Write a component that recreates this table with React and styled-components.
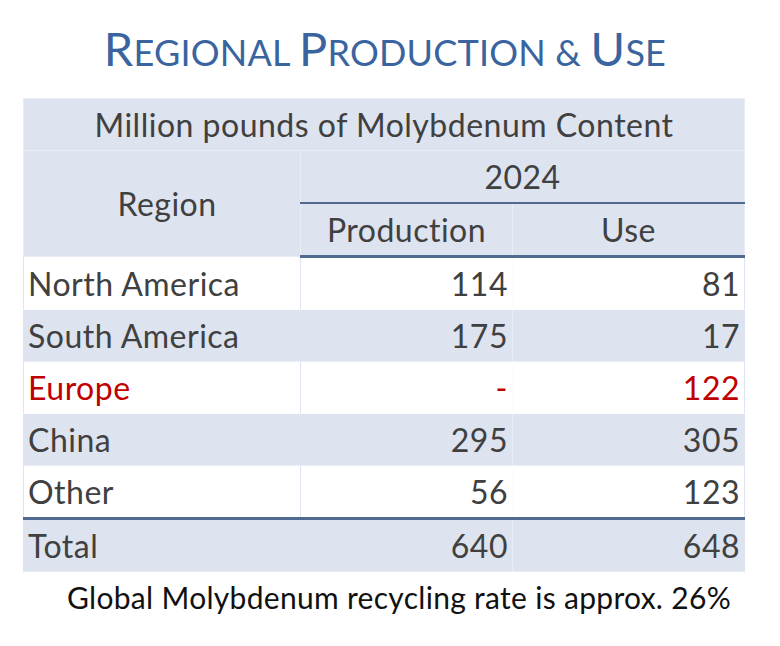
import styled, { createGlobalStyle } from "styled-components";

const rows = [
  { region: "North America", production: "114", use: "81" },
  { region: "South America", production: "175", use: "17" },
  { region: "Europe", production: "-", use: "122", highlight: true },
  { region: "China", production: "295", use: "305" },
  { region: "Other", production: "56", use: "123" },
];

const GlobalStyle = createGlobalStyle`
  html, body {
    margin: 0;
    background: #fff;
  }
  body {
    font-family: Lato, "Open Sans", sans-serif;
    color: #404040;
  }
`;

const Page = styled.div`
  width: 780px;
  height: 646px;
  padding-top: 22px;
  box-sizing: border-box;
`;

const Title = styled.h1`
  margin: 0;
  padding-right: 10px;
  height: 76px;
  text-align: center;
  color: #3a64a0;
  font-weight: 400;
  font-size: 36px;
  line-height: 52px;
  text-transform: uppercase;
  letter-spacing: 0.2px;
`;

const Cap = styled.span`
  font-size: 47px;
`;

const Table = styled.table`
  margin-left: 23px;
  width: 721px;
  border-collapse: collapse;
  table-layout: fixed;
  font-size: 32px;
  letter-spacing: 0.5px;
`;

const Cell = styled.td`
  height: 51px;
  padding: 0 4px;
  border: 1px solid ${(p) => (p.$shade ? "#e8ecf4" : "#fafbfd")};
  background: ${(p) => (p.$shade ? "#dde3ef" : "#fff")};
  text-align: ${(p) => p.$align || "right"};
  color: ${(p) => (p.$red ? "#c00000" : "#404040")};
  white-space: nowrap;

  &:first-child,
  &:last-child {
    border-left-color: #dde3ef;
    border-right-color: #dde3ef;
  }
`;

const HeadCell = styled.th`
  height: 51px;
  padding: 0 4px;
  font-weight: 400;
  background: #dde3ef;
  border: 1px solid #e8ecf4;
  text-align: center;
`;

const RegionHead = styled(HeadCell)`
  padding-left: 14px;
`;

const YearCell = styled(HeadCell)`
  border-bottom: 2px solid #50698f;
`;

const SubRow = styled.tr`
  th {
    border-bottom: 3px solid #50698f;
  }
`;

const TotalRow = styled.tr`
  td {
    border-top: 3px solid #50698f;
  }
`;

const Note = styled.p`
  margin: 7px 0 0 67px;
  font-size: 30px;
  letter-spacing: 0.3px;
  color: #111;
`;

export default function App() {
  return (
    <Page>
      <GlobalStyle />
      <Title>
        <Cap>R</Cap>egional <Cap>P</Cap>roduction &amp; <Cap>U</Cap>se
      </Title>
      <Table>
        <colgroup>
          <col style={{ width: 277 }} />
          <col style={{ width: 212 }} />
          <col style={{ width: 232 }} />
        </colgroup>
        <thead>
          <tr>
            <HeadCell colSpan={3}>Million pounds of Molybdenum Content</HeadCell>
          </tr>
          <tr>
            <RegionHead rowSpan={2}>Region</RegionHead>
            <YearCell colSpan={2}>2024</YearCell>
          </tr>
          <SubRow>
            <HeadCell>Production</HeadCell>
            <HeadCell>Use</HeadCell>
          </SubRow>
        </thead>
        <tbody>
          {rows.map((r, i) => (
            <tr key={r.region}>
              <Cell $shade={i % 2 === 1} $align="left" $red={r.highlight}>
                {r.region}
              </Cell>
              <Cell $shade={i % 2 === 1} $red={r.highlight}>
                {r.production}
              </Cell>
              <Cell $shade={i % 2 === 1} $red={r.highlight}>
                {r.use}
              </Cell>
            </tr>
          ))}
          <TotalRow>
            <Cell $shade $align="left">Total</Cell>
            <Cell $shade>640</Cell>
            <Cell $shade>648</Cell>
          </TotalRow>
        </tbody>
      </Table>
      <Note>Global Molybdenum recycling rate is approx. 26%</Note>
    </Page>
  );
}
